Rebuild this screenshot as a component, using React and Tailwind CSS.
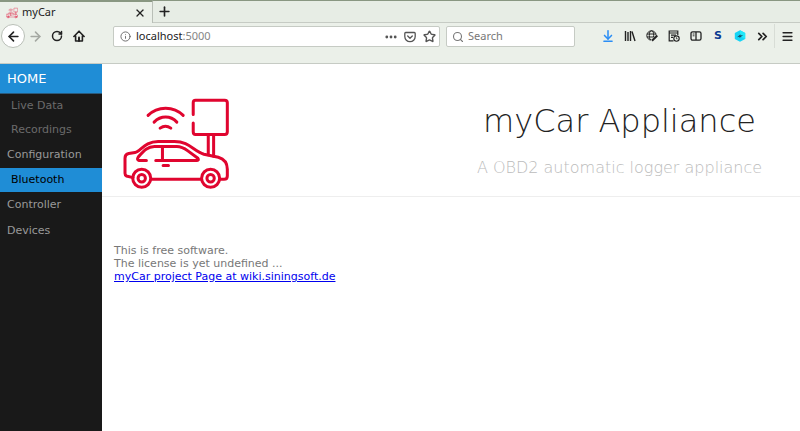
import React, { useState } from 'react';
import { ArrowLeft, ArrowRight, ArrowDownToLine, ChevronsRight, Info, Menu, Plus, RotateCw, Search, Star, X } from 'lucide-react';

const menuItems = [
    { id: 'live', label: 'Live Data', sub: true },
    { id: 'recordings', label: 'Recordings', sub: true },
    { id: 'configuration', label: 'Configuration' },
    { id: 'bluetooth', label: 'Bluetooth', sub: true },
    { id: 'controller', label: 'Controller' },
    { id: 'devices', label: 'Devices' },
];

const CarLogo = ({ className, strokeWidth = 9 }) => (
    <svg viewBox="40 24 320 272" className={className} fill="none" stroke="#e0052f" strokeWidth={strokeWidth} strokeLinecap="round" strokeLinejoin="round" aria-hidden="true">
        <path d="M115 76C143 47 192 47 220 76M133 96C153 76 182 76 201 96M151 114C162 106 172 106 183 114" />
        <path d="M250 73V38Q250 31 257 31H344Q352 31 352 38V125Q352 133 344 133H257Q250 133 250 125V99" />
        <path d="M295 135V194M311 135V198" />
        <path d="M70 262L50 257Q46 255 46 249V204Q46 192 57 190L76 187C93 184 105 154 145 154H194C238 154 250 182 282 192L325 201Q352 209 352 237V257Q352 267 342 267H330M124 267H275" />
        <path d="M110 211H88Q80 209 86 200C103 181 114 169 134 169H201C214 169 223 174 234 182L264 204Q268 210 261 211H138M158 170V210M160 226H176" />
        <circle cx="96" cy="264" r="27" />
        <circle cx="96" cy="264" r="11" />
        <circle cx="302" cy="264" r="27" />
        <circle cx="302" cy="264" r="11" />
    </svg>
);

const HomeIcon = () => (
    <svg viewBox="0 0 12 12" className="size-3" fill="none" stroke="currentColor" strokeWidth="1.6" strokeLinejoin="round" strokeLinecap="round">
        <path d="M.9 6.5L6 1.2L11.1 6.5M2.6 6V11H9.4V6" />
        <path d="M6 11V7.5" strokeWidth="2" />
    </svg>
);

const PocketIcon = () => (
    <svg viewBox="0 0 12 12" className="size-3" fill="none" stroke="currentColor" strokeWidth="1.3" strokeLinecap="round" strokeLinejoin="round">
        <path d="M1.7 1.5H10.3Q11.2 1.5 11.2 2.4V5.5A5.2 5.2 0 0 1 .8 5.5V2.4Q.8 1.5 1.7 1.5ZM3.7 5L6 7.2L8.3 5" />
    </svg>
);

const LibraryIcon = () => (
    <svg viewBox="0 0 12 12" className="size-3" fill="none" stroke="currentColor" strokeWidth="1.4">
        <path d="M1.5 1V11M4 2V11M6.5 1V11M8 1.5L11 11" />
    </svg>
);

const GlobeIcon = () => (
    <svg viewBox="0 0 12 12" className="size-3" fill="none" stroke="currentColor" strokeWidth="1">
        <circle cx="5.5" cy="5.5" r="4.7" />
        <ellipse cx="5.5" cy="5.5" rx="2.2" ry="4.7" />
        <path d="M1 4H10M1 7H9.5" />
        <path d="M5.5 11.5L11.5 5.5" stroke="#ebf0e9" strokeWidth="3" />
        <path d="M6 10.8L11.3 5.5" strokeWidth="2" />
    </svg>
);

const ReaderIcon = () => (
    <svg viewBox="0 0 12 12" className="size-3" fill="none" stroke="currentColor" strokeWidth="1.2">
        <path d="M5.5 10.8H1.2V1H9.8V5M1 3H10M3 5.2H8M3 7.4H5" />
        <circle cx="8.5" cy="8.6" r="2.7" fill="#ebf0e9" strokeWidth="1.1" />
        <path d="M8.4 7.2V8.8H9.6" strokeWidth=".8" />
    </svg>
);

const SidebarIcon = () => (
    <svg viewBox="0 0 12 12" className="size-3" fill="none" stroke="currentColor" strokeWidth="1.3">
        <rect x="1" y="1.8" width="10" height="8.4" rx="1.6" />
        <path d="M6 2V10" />
        <path d="M2.7 4H4.5M2.7 5.8H4.5" strokeWidth=".9" />
    </svg>
);

const HexIcon = () => (
    <svg viewBox="0 0 12 12" className="size-3">
        <path d="M6 .2L11.2 3.1V8.9L6 11.8L.8 8.9V3.1Z" fill="#15d4f5" />
        <path d="M6 .2L11.2 3.1V8.9L6 6Z" fill="#21e8fa" />
        <path d="M3 7.2L6.5 4.2V5.4L9.2 4.9L5.5 8V6.8Z" fill="#1a4a61" />
    </svg>
);

const ToolButton = ({ label, className = '', children }) => (
    <button type="button" aria-label={label} className={`flex size-4 items-center justify-center ${className}`}>
        {children}
    </button>
);

const TabStrip = () => (
    <div className="flex h-[23px] border-b border-[#c6cbc4] bg-[#e7ede5]">
        <div className="-mb-px flex w-[153px] items-center gap-1 border-t-2 border-r border-t-[#899782] border-r-[#b9bfb7] bg-[#ebf0e9] pr-1 pl-1.5 text-[11px]">
            <CarLogo className="size-3 opacity-80" strokeWidth={12} />
            <span className="flex-1">myCar</span>
            <ToolButton label="Close tab"><X size={12} strokeWidth={2.6} /></ToolButton>
        </div>
        <div className="flex flex-1 items-center border-t border-[#899782] pl-[3px]">
            <ToolButton label="New tab"><Plus size={15} strokeWidth={2.6} /></ToolButton>
        </div>
    </div>
);

const Toolbar = () => {
    const [query, setQuery] = useState('');

    return (
        <div className="flex h-[41px] items-start border-b border-[#c6cbc4] bg-[#ebf0e9] px-px pt-px">
            <div className="flex h-6 items-center gap-1.5">
                <button type="button" aria-label="Back" className="flex size-6 items-center justify-center rounded-full border border-[#b9bfb7] bg-white">
                    <ArrowLeft size={15} strokeWidth={2.6} />
                </button>
                <ToolButton label="Forward" className="-ml-1 text-[#a4a8a2]"><ArrowRight size={15} strokeWidth={2.5} /></ToolButton>
                <ToolButton label="Reload"><RotateCw size={12} strokeWidth={3} /></ToolButton>
                <ToolButton label="Home"><HomeIcon /></ToolButton>
            </div>
            <div className="mt-0.5 ml-[26px] flex h-[21px] flex-1 items-center rounded-xs border border-[#c6cbc4] bg-white px-1.5">
                <Info size={11} strokeWidth={2} className="mr-[5px] text-[#666]" />
                <span className="flex-1 text-[11px]">localhost<span className="text-[#858585]">:5000</span></span>
                <div className="flex items-center gap-[3px] text-[#555]">
                    <ToolButton label="Page actions">
                        <svg viewBox="0 0 12 12" className="size-3" fill="currentColor">
                            <circle cx="1.8" cy="6" r="1.4" />
                            <circle cx="6" cy="6" r="1.4" />
                            <circle cx="10.2" cy="6" r="1.4" />
                        </svg>
                    </ToolButton>
                    <ToolButton label="Save to Pocket"><PocketIcon /></ToolButton>
                    <ToolButton label="Bookmark" className="-mr-1"><Star size={13} strokeWidth={2.6} /></ToolButton>
                </div>
            </div>
            <label className="mt-0.5 ml-1.5 flex h-[21px] w-[129px] items-center rounded-xs border border-[#c6cbc4] bg-white px-[5px]">
                <Search size={12} strokeWidth={2.2} className="mr-1 shrink-0 text-[#777]" />
                <input
                    type="text"
                    aria-label="Search"
                    placeholder="Search"
                    value={query}
                    onChange={(e) => setQuery(e.target.value)}
                    className="w-full min-w-0 text-[11px] outline-none placeholder:text-[#777]"
                />
            </label>
            <div className="ml-[25px] flex h-6 items-center gap-1.5 pr-1">
                <ToolButton label="Downloads" className="text-[#2a8df5]"><ArrowDownToLine size={14} strokeWidth={2.6} /></ToolButton>
                <ToolButton label="Library"><LibraryIcon /></ToolButton>
                <ToolButton label="Web tools"><GlobeIcon /></ToolButton>
                <ToolButton label="Reading list"><ReaderIcon /></ToolButton>
                <ToolButton label="Sidebars"><SidebarIcon /></ToolButton>
                <ToolButton label="Stylus" className="font-['DejaVu_Sans',sans-serif] text-[11px] font-bold text-[#0b3a91]">S</ToolButton>
                <ToolButton label="Proxy"><HexIcon /></ToolButton>
                <ToolButton label="More tools"><ChevronsRight size={15} strokeWidth={2.8} /></ToolButton>
                <div className="-ml-0.5 flex h-6 items-center border-l border-[#d8ddd6] pl-1">
                    <ToolButton label="Open menu"><Menu size={13} strokeWidth={3} /></ToolButton>
                </div>
            </div>
        </div>
    );
};

const SideMenu = () => {
    const [selected, setSelected] = useState('bluetooth');

    return (
        <nav className="w-[102px] shrink-0 bg-[#191919] text-[11px]">
            <a href="#home" className="flex h-[30px] items-center border-b border-[#2a5a7c] bg-[#1f8dd6] pl-[7px] text-[13px] text-white">HOME</a>
            <ul>
                {menuItems.map(item => (
                    <li key={item.id}>
                        <a
                            href={`#${item.id}`}
                            onClick={() => setSelected(item.id)}
                            className={`flex items-center ${item.sub ? 'h-6 pl-[11px]' : 'h-[26px] pl-[7px]'} ${selected === item.id ? 'bg-[#1f8dd6] text-black' : item.sub ? 'text-[#6b6b6b]' : 'text-[#999]'}`}
                        >
                            {item.label}
                        </a>
                    </li>
                ))}
            </ul>
        </nav>
    );
};

const App = () => {
    return (
        <div className="flex min-h-screen flex-col bg-white font-['DejaVu_Sans',sans-serif] text-[#222]">
            <div className="font-['Noto_Sans',sans-serif]">
                <TabStrip />
                <Toolbar />
            </div>
            <div className="flex flex-1">
                <SideMenu />
                <main className="min-w-0 flex-1">
                    <header className="grid grid-cols-2 border-b border-[#eee] px-3 pt-[34px] pb-[7px]">
                        <CarLogo className="ml-[9px] h-[91px] w-[107px]" />
                        <div className="text-center">
                            <h1 className="text-[32px] leading-[46px] font-extralight whitespace-nowrap text-[#222]">myCar Appliance</h1>
                            <h2 className="mt-3 text-[16px] leading-6 font-extralight whitespace-nowrap text-[#bbb]">A OBD2 automatic logger appliance</h2>
                        </div>
                    </header>
                    <div className="px-3 pt-[47px] text-[11px] leading-[13px] text-[#777]">
                        <p>This is free software.</p>
                        <p>The license is yet undefined ...</p>
                        <a href="#wiki" className="text-[#00e] underline">myCar project Page at wiki.siningsoft.de</a>
                    </div>
                </main>
            </div>
        </div>
    );
};

export default App;
